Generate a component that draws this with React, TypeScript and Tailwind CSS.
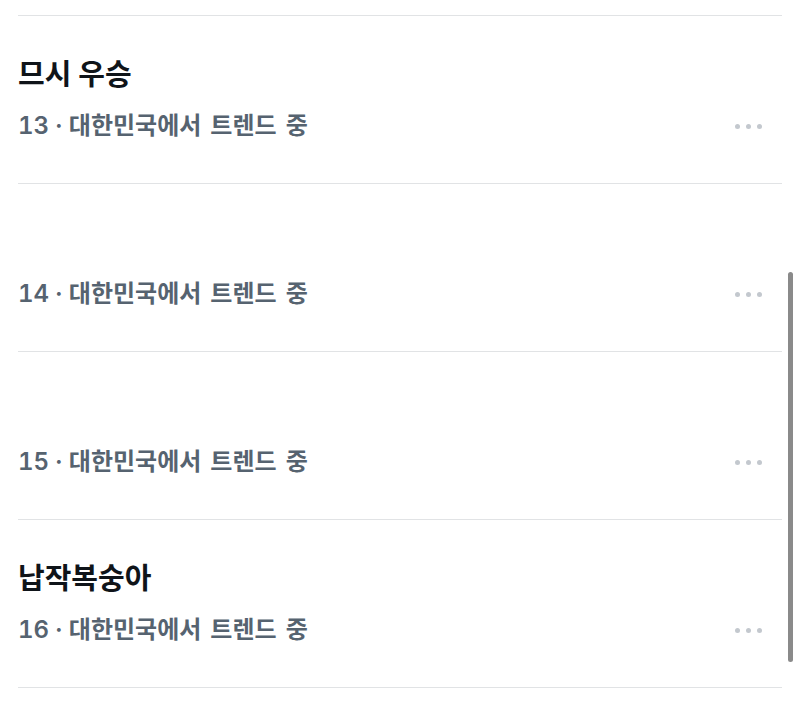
import { Fragment } from "react";

type Trend = { rank: number; title: string };

const trends: Trend[] = [
  { rank: 13, title: "므시 우승" },
  { rank: 14, title: "" },
  { rank: 15, title: "" },
  { rank: 16, title: "납작복숭아" },
];

function MoreDots() {
  return (
    <div className="flex items-center gap-[6px] pr-[20px]">
      <span className="h-[5px] w-[5px] rounded-full bg-[#c3c8ce]" />
      <span className="h-[5px] w-[5px] rounded-full bg-[#c3c8ce]" />
      <span className="h-[5px] w-[5px] rounded-full bg-[#c3c8ce]" />
    </div>
  );
}

function TrendRow({ trend }: { trend: Trend }) {
  return (
    <div className="h-[168px] border-t border-[#e1e3e5] pt-[41px]">
      <div className="h-[36px] text-[29px] font-bold leading-[36px] text-[#0f1419]">
        {trend.title}
      </div>
      <div className="mt-[17px] flex h-[32px] items-center justify-between">
        <span className="text-[24px] font-semibold leading-[32px] text-[#566370]">
          <span className="tabular-nums">{trend.rank}</span> ·{" "}
          <span className="[word-spacing:3px]">대한민국에서 트렌드 중</span>
        </span>
        <MoreDots />
      </div>
    </div>
  );
}

export default function App() {
  return (
    <div
      className="relative h-[705px] w-[800px] overflow-hidden bg-white"
      style={{ fontFamily: 'Inter, "Noto Sans CJK KR", "Noto Sans", sans-serif' }}
    >
      <div className="px-[18px] pt-[15px]">
        {trends.map((t) => (
          <Fragment key={t.rank}>
            <TrendRow trend={t} />
          </Fragment>
        ))}
        <div className="border-t border-[#e1e3e5]" />
      </div>

      {/* scroll indicator */}
      <div className="absolute left-[788px] top-[272px] h-[390px] w-[5px] rounded-full bg-[#8a8a8a]" />
    </div>
  );
}
